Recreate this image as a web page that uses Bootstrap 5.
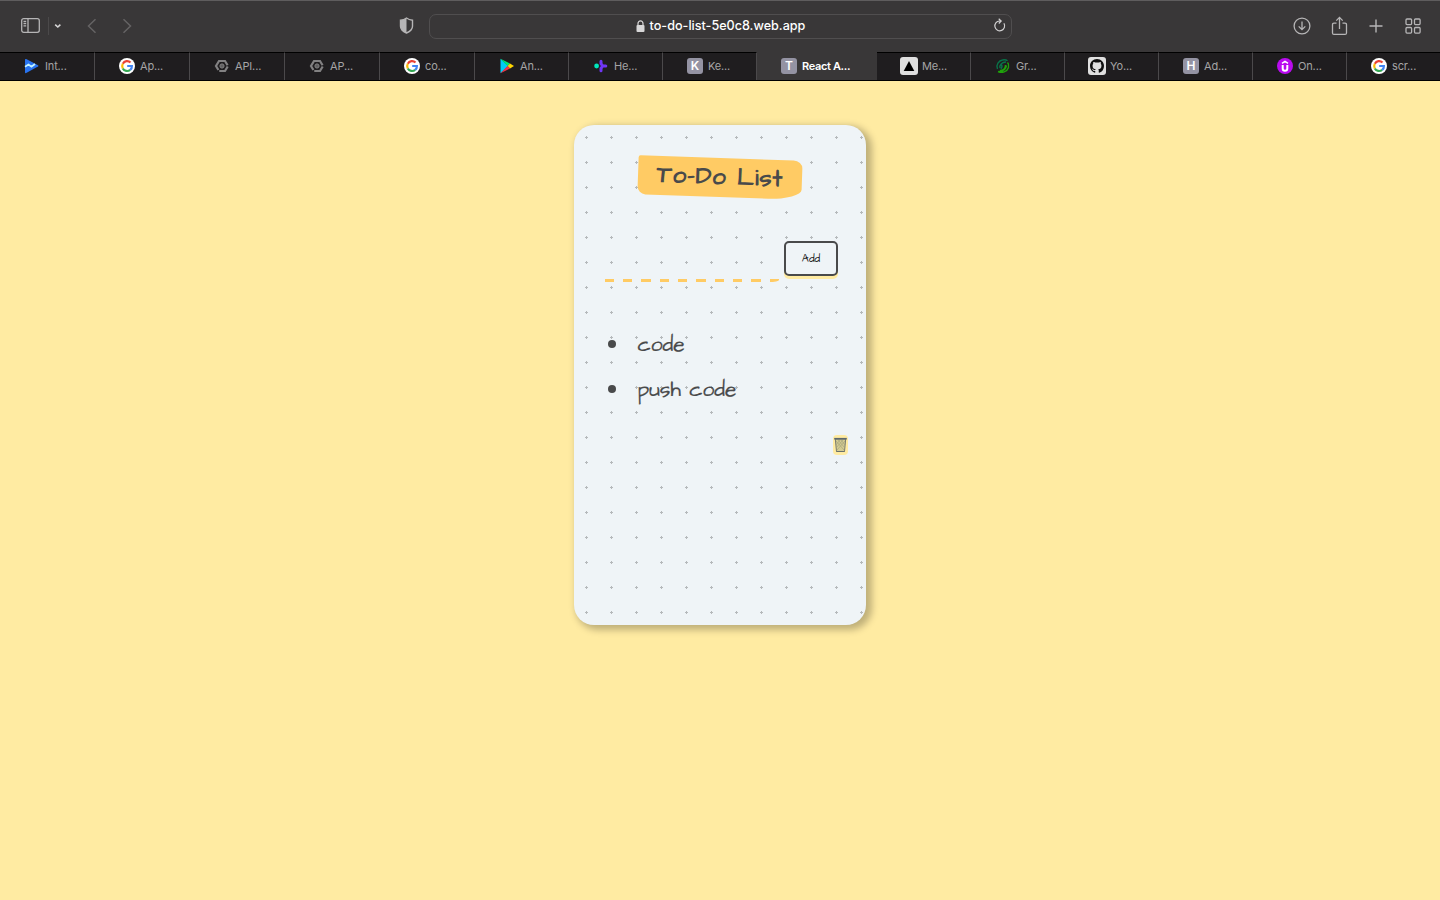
<!DOCTYPE html>
<html lang="en">
<head>
<meta charset="utf-8">
<meta name="viewport" content="width=device-width, initial-scale=1">
<title>React App</title>
<link rel="stylesheet" href="https://cdn.jsdelivr.net/npm/bootstrap@5.3.0/dist/css/bootstrap.min.css">
<style>
body{background:#ffeba2;font-family:Inter,"Liberation Sans",sans-serif;height:900px;overflow:hidden}
svg{display:block;flex:none}
.toolbar{height:52px;background:#393738;border-top:1px solid #5f5d5e;color:#b6b5b6;display:grid;grid-template-columns:429px 583px 1fr}
.toolbar>.d-flex:not(.address){padding-bottom:2px}
.toolbar .split{width:1px;height:18px;background:#4b494a}
.address{height:25px;margin-top:13px;border:1px solid #504e4f;border-radius:7px;color:#fff;font-size:12.6px;font-weight:500;line-height:22px;padding-bottom:1px;position:relative}
.address .reload{position:absolute;right:5px;top:3px}
.tabs{height:29px;background:#1f1d1f;border-bottom:1px solid #000}
.tab{flex:none;width:94px;height:28px;padding-left:24px;border-top:1px solid #000;border-right:1px solid #4b494b;color:#a5a4a5;font-size:11px;letter-spacing:-.15px;white-space:nowrap}
.tab.wide{width:95px}
.tab.current{width:120px;background:#393738;border-top-color:#393738;border-right-color:#393738;color:#fff;font-weight:600;letter-spacing:-.35px}
.tab:last-child{width:93px;border-right:0}
.tab>span:last-child{margin-left:5px}
.tab>:first-child{margin-bottom:2px}
.letter{width:16px;height:16px;border-radius:3px;background:#9493a3;color:#fff;font-size:12px;font-weight:600;line-height:16px;letter-spacing:0;text-align:center}
.tab .big{margin-left:-1px;margin-right:-1px}
.sheet{width:292px;height:500px;margin:44px auto 0;border-radius:20px;background:#eff4f7 radial-gradient(#b5b9bb 7.2%,transparent 0) 0 0/25px 25px;box-shadow:4px 3px 7px 2px #00000040;font-family:"Architects Daughter",Lato,cursive;color:#494a4b;padding-top:33px}
.sheet h1{width:164px;height:38.5px;margin:0 auto;background:#ffcb64;border-radius:2px 9px 33px 8px/2px 8px 10px 8px;transform:rotate(2deg);font-size:24px;font-weight:700;line-height:39px;letter-spacing:1px;text-align:center;white-space:nowrap}
.entry{margin:43.5px 28px 0 30px;height:42px}
.entry input{width:175px;height:42px;border:0;outline:0;border-radius:0 0 10px 0/0 0 2px 0;background:repeating-linear-gradient(90deg,transparent 0 .6px,#ffcb64 .6px 9.9px,transparent 9.9px 18.35px) 0 100%/100% 3px no-repeat}
.entry button{width:54px;height:35px;margin-top:1px;padding:0;background:#eff4f7;border:2px solid #494a4b;border-radius:5px;box-shadow:0 3px 0 #ffeba2;color:#111;font-size:11px;line-height:31px}
.entry button:hover{background:#fff}
.items{margin:39px 0 0;padding:0 0 0 34px;list-style:none;font-size:21px;-webkit-text-stroke:.2px #494a4b}
.items li{height:45px;line-height:42px;padding-top:2px}
.items li::before{content:"";width:8px;height:8px;border-radius:50%;background:#494a4b;margin:0 21.5px 2px 0}
.clear{width:15px;height:20px;margin:24px 18px 0 auto;border-radius:4px;background:#ffeba2}
</style>
</head>
<body>
<svg width="0" height="0" class="position-absolute">
 <symbol id="google" viewBox="0 0 16 16"><circle cx="8" cy="8" r="8" fill="#fff"/><g fill="none" stroke-width="2.2"><path d="M3.8 5.7A4.9 4.9 0 0 1 11.5 4.5" stroke="#ea4335"/><path d="M3.8 5.7a4.9 4.9 0 0 0 0 4.7" stroke="#fbbc05"/><path d="M3.8 10.4a4.9 4.9 0 0 0 7.4 1.5" stroke="#34a853"/><path d="M11.2 11.9a4.9 4.9 0 0 0 1.7-3.9H8.2" stroke="#4285f4"/></g></symbol>
 <symbol id="api" viewBox="0 0 16 16"><path d="M5 3h6l3 5-3 5H5L2 8z" fill="none" stroke="#828182" stroke-width="2.2" stroke-dasharray="11 1.4"/><circle cx="8" cy="8" r="2.1" fill="#626162" stroke="#828182"/></symbol>
</svg>
<header>
<div class="toolbar">
 <div class="d-flex align-items-center" style="padding-left:21px">
  <svg width="19" height="15" viewBox="0 0 19 15" fill="none" stroke="currentColor" stroke-width="1.3"><rect x=".7" y=".7" width="17.6" height="13.6" rx="2"/><path d="M7 1v13M2.5 3.5h2.7M2.5 5.7h2.7M2.5 7.9h2.7"/></svg>
  <span class="split ms-2"></span>
  <svg class="ms-1" width="10" height="8" viewBox="0 0 10 8" fill="none" stroke="#d5d4d5" stroke-width="1.6"><path d="M2.2 2.6 4.8 5l2.6-2.4"/></svg>
  <svg style="margin-left:23px" width="12" height="16" viewBox="0 0 12 16" fill="none" stroke="#656364" stroke-width="1.5"><path d="M9.5 1.3 2.5 8l7 6.7"/></svg>
  <svg style="margin-left:23px" width="12" height="16" viewBox="0 0 12 16" fill="none" stroke="#656364" stroke-width="1.5"><path d="m2.5 1.3 7 6.7-7 6.7"/></svg>
  <svg class="ms-auto" style="margin-right:15px" width="15" height="17" viewBox="0 0 15 17"><path d="M7.5 1c2 1.5 4 2 6 2.2v6c0 3-2 5-6 6.8-4-1.8-6-3.8-6-6.8v-6c2-.2 4-.7 6-2.2z" fill="none" stroke="currentColor" stroke-width="1.4"/><path d="M7.5 1v15c-4-1.8-6-3.8-6-6.8v-6c2-.2 4-.7 6-2.2z" fill="currentColor"/></svg>
 </div>
 <div class="address d-flex justify-content-center align-items-center">
  <svg width="9" height="12" viewBox="0 0 9 12"><rect x=".5" y="5" width="8" height="7" rx="1" fill="#d8d7d8"/><path d="M2 5.5V3.4a2.5 2.5 0 0 1 5 0v2.1" fill="none" stroke="#d8d7d8" stroke-width="1.2"/></svg>
  <span style="margin-left:5px">to-do-list-5e0c8.web.app</span>
  <svg class="reload" width="13" height="15" viewBox="0 0 13 15" fill="none" stroke="#d0cfd0" stroke-width="1.2"><path d="M10.9 5.3A4.9 4.9 0 1 1 6.5 3h1.5M5.7.7 8.2 3 5.8 5.5"/></svg>
 </div>
 <div class="d-flex align-items-center justify-content-end" style="padding-right:19.5px">
  <svg width="18" height="18" viewBox="0 0 18 18" fill="none" stroke="currentColor" stroke-width="1.3"><circle cx="9" cy="9" r="7.9"/><path d="M9 4.5v8M5.7 9.4 9 12.7l3.3-3.3"/></svg>
  <svg style="margin-left:20px" width="17" height="20" viewBox="0 0 17 20" fill="none" stroke="currentColor" stroke-width="1.3"><path d="M5.5 7.2H3q-1.5 0-1.5 1.5v8.2q0 1.5 1.5 1.5h11q1.5 0 1.5-1.5V8.7q0-1.5-1.5-1.5h-2.5M8.5 13V1.5M5.3 4.6l3.2-3.2 3.2 3.2"/></svg>
  <svg style="margin-left:21px" width="14" height="14" viewBox="0 0 14 14" stroke="currentColor" stroke-width="1.4"><path d="M7 .5v13M.5 7h13"/></svg>
  <svg style="margin-left:22px" width="16" height="16" viewBox="0 0 16 16" fill="none" stroke="currentColor" stroke-width="1.3"><rect x="1" y="1" width="5.6" height="5.6" rx="1"/><rect x="9.5" y="1" width="5.6" height="5.6" rx="1"/><rect x="1" y="9.5" width="5.6" height="5.6" rx="1"/><rect x="9.5" y="9.5" width="5.6" height="5.6" rx="1"/></svg>
 </div>
</div>
<nav class="tabs d-flex">
 <div class="tab wide d-flex align-items-center"><svg width="16" height="16" viewBox="0 0 16 16"><path d="M1 1.8q0-1.2 1.2-.7L14 7.3q1 .7 0 1.3L2.2 15q-1.2.5-1.2-.8z" fill="#2873f0"/><path d="m1 8.7 3.5-2.2 3 2.2L11 6" fill="none" stroke="#c3f3ff" stroke-width="1.8"/></svg><span>Int...</span></div>
 <div class="tab wide d-flex align-items-center"><svg width="16" height="16"><use href="#google"/></svg><span>Ap...</span></div>
 <div class="tab wide d-flex align-items-center"><svg width="16" height="16"><use href="#api"/></svg><span>API...</span></div>
 <div class="tab wide d-flex align-items-center"><svg width="16" height="16"><use href="#api"/></svg><span>AP...</span></div>
 <div class="tab wide d-flex align-items-center"><svg width="16" height="16"><use href="#google"/></svg><span>co...</span></div>
 <div class="tab d-flex align-items-center"><svg width="16" height="16" viewBox="0 0 16 16"><path d="M1.5.8v14.4L9 8z" fill="#00ccf5"/><path d="M1.5.8 11 5.5 8.5 8z" fill="#00e676"/><path d="m11 5.5 4 2.5-4 2.5L8.5 8z" fill="#ffd500"/><path d="M1.5 15.2 11 10.5 8.5 8z" fill="#f0364b"/></svg><span>An...</span></div>
 <div class="tab d-flex align-items-center"><svg width="16" height="16" viewBox="0 0 16 16"><path d="M8 3.2v2.3l1.6 2.5L8 10.5v2.3M9.5 8h3.3" fill="none" stroke="#6f36f4" stroke-width="3" stroke-linecap="round"/><circle cx="3.6" cy="8" r="2.4" fill="#00e5bd"/></svg><span>He...</span></div>
 <div class="tab d-flex align-items-center"><span class="letter">K</span><span>Ke...</span></div>
 <div class="tab current d-flex align-items-center"><span class="letter">T</span><span>React A...</span></div>
 <div class="tab d-flex align-items-center"><svg class="big" width="18" height="18" viewBox="0 0 18 18"><rect width="18" height="18" rx="3" fill="#e0e0e0"/><path d="m9 4 5.3 10H3.7z" fill="#000"/></svg><span>Me...</span></div>
 <div class="tab d-flex align-items-center"><svg width="16" height="16" viewBox="0 0 16 16" fill="none" stroke-width="1.4"><path d="M2.5 11C.5 7 4 2.5 7.5 2c2-.4 4 0 5 .8M5 10c-1-3 2-6 6-6M6 6c1.5 1.5 1 3.5 0 5" stroke="#087349"/><path d="M3 13.5c4 2 9 .5 10.5-4 .5-2 0-4-1-5M5 12.5c4 0 5.5-2.5 5.5-5.5M4 13.5c4.5 0 7-2.5 7.5-6" stroke="#1fa30a"/></svg><span>Gr...</span></div>
 <div class="tab d-flex align-items-center"><svg class="big" width="18" height="18" viewBox="0 0 18 18"><rect width="18" height="18" rx="3" fill="#e0e0e0"/><path transform="translate(2 2) scale(.875)" d="M8 0C3.58 0 0 3.58 0 8c0 3.54 2.29 6.53 5.47 7.59.4.07.55-.17.55-.38 0-.19-.01-.82-.01-1.49-2.01.37-2.53-.49-2.69-.94-.09-.23-.48-.94-.82-1.13-.28-.15-.68-.52-.01-.53.63-.01 1.08.58 1.23.82.72 1.21 1.87.87 2.33.66.07-.52.28-.87.51-1.07-1.78-.2-3.64-.89-3.64-3.95 0-.87.31-1.59.82-2.15-.08-.2-.36-1.02.08-2.12 0 0 .67-.21 2.2.82A7.7 7.7 0 0 1 8 3.86c.68 0 1.36.09 2 .27 1.53-1.04 2.2-.82 2.2-.82.44 1.1.16 1.92.08 2.12.51.56.82 1.27.82 2.15 0 3.07-1.87 3.75-3.65 3.95.29.25.54.73.54 1.48 0 1.07-.01 1.93-.01 2.2 0 .21.15.46.55.38A8 8 0 0 0 16 8c0-4.42-3.58-8-8-8z" fill="#111"/></svg><span>Yo...</span></div>
 <div class="tab d-flex align-items-center"><span class="letter">H</span><span>Ad...</span></div>
 <div class="tab d-flex align-items-center"><svg width="16" height="16" viewBox="0 0 16 16"><circle cx="8" cy="8" r="8" fill="#b90bef"/><path d="M5.7 7v3.5a2.3 2.3 0 0 0 4.6 0V7" fill="none" stroke="#fff" stroke-width="2"/><path d="M5 5.3 8 3.3l3 2" fill="none" stroke="#fff" stroke-width="1.5"/></svg><span>On...</span></div>
 <div class="tab d-flex align-items-center"><svg width="16" height="16"><use href="#google"/></svg><span>scr...</span></div>
</nav>
</header>
<main class="sheet">
 <h1>To-Do List</h1>
 <form class="entry d-flex justify-content-between" onsubmit="return false">
  <input type="text" aria-label="New item">
  <button type="submit">Add</button>
 </form>
 <ul class="items">
  <li class="d-flex align-items-center">code</li>
  <li class="d-flex align-items-center">push code</li>
 </ul>
 <div class="clear"><svg width="15" height="20" viewBox="0 0 15 20"><path d="m2.3 4 1.2 12.5h8L12.7 4z" fill="#d3cb92" stroke="#777b70"/><path d="m3 6 8 9M5 5l7 8M8 5l4 5M12 6l-8 9M10 5l-7 8M7 5l-4 5" stroke="#a19f78" stroke-width=".6"/><path d="M1.2 3.7h12.6" stroke="#5d686d" stroke-width="1.6"/><path d="M3.5 16.5h8" stroke="#68706d"/></svg></div>
</main>
<script src="https://cdn.jsdelivr.net/npm/bootstrap@5.3.0/dist/js/bootstrap.bundle.min.js"></script>
</body>
</html>
